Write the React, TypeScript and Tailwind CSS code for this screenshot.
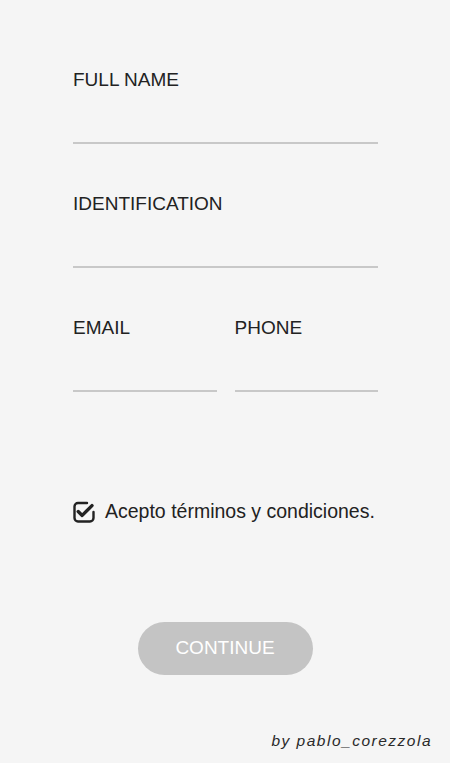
import React, { useState } from 'react';

function Field({ label, className = '' }: { label: string; className?: string }) {
  return (
    <div className={`flex flex-col min-w-0 ${className}`}>
      <label className="h-[24px] leading-[24px] text-[19px] text-[#222]">{label}</label>
      <input
        type="text"
        className="w-full min-w-0 h-[52px] bg-transparent border-b-2 border-[#c8c8c8] outline-none text-[18px] text-[#222]"
      />
    </div>
  );
}

function CheckIcon({ checked }: { checked: boolean }) {
  return (
    <svg width="22" height="22" viewBox="0 0 22 22" fill="none" className="shrink-0">
      {checked ? (
        <>
          <path
            d="M14 2 H5 A3.5 3.5 0 0 0 1.5 5.5 V17 A3.5 3.5 0 0 0 5 20.5 H17 A3.5 3.5 0 0 0 20.5 17 V11"
            stroke="#222"
            strokeWidth="2.4"
            strokeLinecap="round"
          />
          <path d="M5.2 10.6 L9.2 14.4 L19 4.6" stroke="#222" strokeWidth="3.4" strokeLinecap="round" strokeLinejoin="round" />
        </>
      ) : (
        <rect x="1.5" y="1.5" width="19" height="19" rx="3.5" stroke="#222" strokeWidth="2.4" />
      )}
    </svg>
  );
}

function App() {
  const [accepted, setAccepted] = useState(true);

  return (
    <div className="min-h-screen bg-[#f5f5f5] font-['Liberation_Sans',Arial,sans-serif] flex flex-col">
      {/* Form */}
      <form className="flex flex-col pl-[73px] pr-[72px] pt-[68px]">
        <Field label="FULL NAME" />
        <Field label="IDENTIFICATION" className="mt-[48px]" />
        <div className="grid grid-cols-2 gap-[18px] mt-[48px]">
          <Field label="EMAIL" />
          <Field label="PHONE" />
        </div>

        {/* Terms */}
        <button
          type="button"
          onClick={() => setAccepted(!accepted)}
          className="flex items-center gap-[10px] mt-[108px] h-[24px] text-[#222]"
        >
          <CheckIcon checked={accepted} />
          <span className="text-[19.5px]">Acepto términos y condiciones.</span>
        </button>

        <div className="flex justify-center mt-[98px] -ml-[73px] -mr-[72px]">
          <button
            type="button"
            className="w-[175px] h-[53px] rounded-full bg-[#c4c4c4] text-white text-[19px]"
          >
            CONTINUE
          </button>
        </div>
      </form>

      {/* Footer */}
      <div className="flex justify-end pr-[18px] mt-[56px]">
        <span className="italic text-[15.5px] leading-[20px] tracking-[1.5px] text-[#2a2a2a]">by pablo_corezzola</span>
      </div>
    </div>
  );
}

export default App;
